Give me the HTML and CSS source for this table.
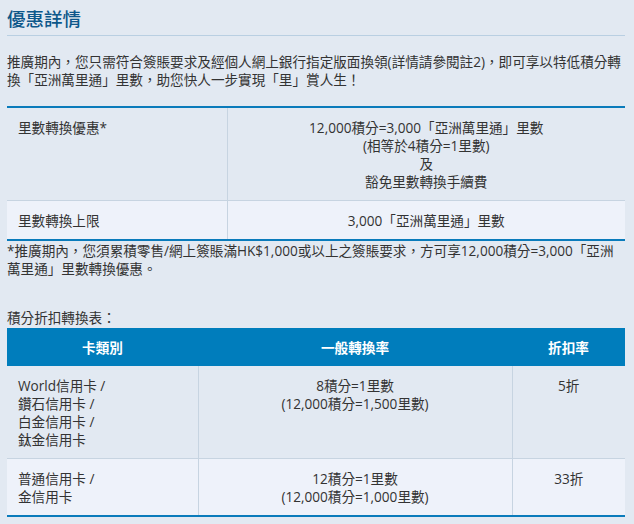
FILE: index.html
```html
<!DOCTYPE html>
<html lang="zh-Hant">
<head>
<meta charset="utf-8">
<title>優惠詳情</title>
<link rel="stylesheet" href="styles.css">
</head>
<body>
<div class="page">
  <h2 class="title">優惠詳情</h2>
  <p class="intro">推廣期內，您只需符合簽賬要求及經個人網上銀行指定版面換領(詳情請參閱註2)，即可享以特低積分轉換「亞洲萬里通」里數，助您快人一步實現「里」賞人生！</p>

  <table class="offer">
    <colgroup><col class="c-label"><col class="c-value"></colgroup>
    <tbody>
      <tr class="row-a">
        <td class="left">里數轉換優惠*</td>
        <td class="center">12,000積分=3,000「亞洲萬里通」里數<br>(相等於4積分=1里數)<br>及<br>豁免里數轉換手續費</td>
      </tr>
      <tr class="row-b">
        <td class="left">里數轉換上限</td>
        <td class="center">3,000「亞洲萬里通」里數</td>
      </tr>
    </tbody>
  </table>
  <p class="note">*推廣期內，您須累積零售/網上簽賬滿HK$1,000或以上之簽賬要求，方可享12,000積分=3,000「亞洲萬里通」里數轉換優惠。</p>

  <p class="caption">積分折扣轉換表：</p>
  <table class="rates">
    <colgroup><col class="c1"><col class="c2"><col class="c3"></colgroup>
    <thead>
      <tr>
        <th>卡類別</th>
        <th>一般轉換率</th>
        <th>折扣率</th>
      </tr>
    </thead>
    <tbody>
      <tr class="row-a">
        <td class="left">World信用卡 /<br>鑽石信用卡 /<br>白金信用卡 /<br>鈦金信用卡</td>
        <td class="center">8積分=1里數<br>(12,000積分=1,500里數)</td>
        <td class="center">5折</td>
      </tr>
      <tr class="row-b">
        <td class="left">普通信用卡 /<br>金信用卡</td>
        <td class="center">12積分=1里數<br>(12,000積分=1,000里數)</td>
        <td class="center">33折</td>
      </tr>
    </tbody>
  </table>
</div>
</body>
</html>
```

FILE: styles.css
```css
html, body {
  margin: 0;
  padding: 0;
  background: #e2e9f2;
}

body {
  font-family: "Open Sans", "Noto Sans CJK TC", sans-serif;
  font-size: 13.6px;
  line-height: 18px;
  color: #333333;
}

.page {
  padding: 0 9px 0 7px;
}

.title {
  margin: 0;
  padding: 6px 0 3px;
  font-size: 18.5px;
  line-height: 26px;
  font-weight: 500;
  color: #0d578a;
  border-bottom: 1px solid #b9cfe2;
}

.intro {
  margin: 17px 0 0;
}

table {
  width: 100%;
  border-collapse: collapse;
  table-layout: fixed;
}

.offer {
  margin-top: 17px;
  border-top: 2px solid #0a7bbb;
  border-bottom: 2px solid #0a7bbb;
}

.offer .c-label { width: 220px; }

td, th {
  padding: 11px 11px 9px;
  vertical-align: top;
}

td {
  border: 1px solid #c7d4e1;
}

tr > td:first-child { border-left: none; }
tr > td:last-child { border-right: none; }
tbody tr:first-child td { border-top: none; }
tbody tr:last-child td { border-bottom: none; }

.left { text-align: left; }
.center { text-align: center; }

.row-a td { background: #e2e9f2; }
.row-b td { background: #eef2fa; }

.note {
  margin: 1px 0 0;
}

.caption {
  margin: 31px 0 1px;
}

.rates {
  border-bottom: 2px solid #0a7bbb;
}

.rates .c1 { width: 191px; }
.rates .c3 { width: 113px; }

.rates th {
  background: #007dbc;
  color: #ffffff;
  font-weight: bold;
  text-align: center;
  border: none;
}
```
